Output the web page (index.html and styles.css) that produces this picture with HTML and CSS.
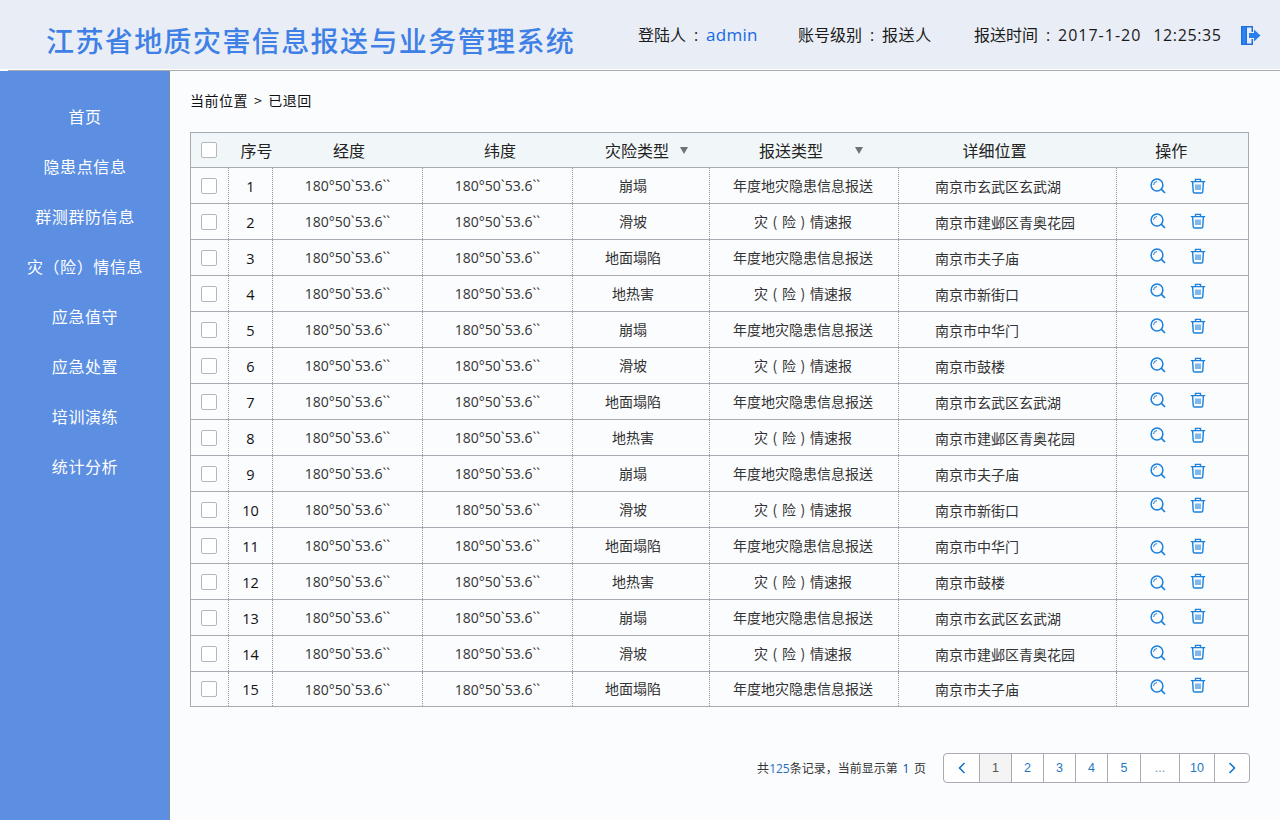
FILE: index.html
```html
<!DOCTYPE html>
<html lang="zh">
<head>
<meta charset="utf-8">
<title>江苏省地质灾害信息报送与业务管理系统</title>
<link rel="stylesheet" href="styles.css">
</head>
<body>
<svg class="sprite" width="0" height="0">
  <symbol id="i-search" viewBox="0 0 16 16"><circle cx="7" cy="7" r="5.900" fill="none" stroke="currentColor" stroke-width="1.500"/><path d="M3.600 7A3.400 3.400 0 0 1 7 3.600" fill="none" stroke="currentColor" stroke-width="1"/><path d="M11.200 11.200l3.800 3.800" fill="none" stroke="currentColor" stroke-width="1.700"/></symbol>
  <symbol id="i-trash" viewBox="0 0 16 16"><path d="M.8 3.600h14.400M5.500 3.400V1.400h5v2" fill="none" stroke="currentColor" stroke-width="1.400"/><path d="M2.600 3.800l.6 9.600c0 1 .6 1.600 1.600 1.600h6.400c1 0 1.600-.6 1.600-1.600l.6-9.600" fill="none" stroke="currentColor" stroke-width="1.400"/><path d="M6 6.500v5.500M8 6.500v5.500M10 6.500v5.500" fill="none" stroke="currentColor" stroke-width="1.100"/></symbol>
</svg>
<header class="topbar">
  <h1 class="title">江苏省地质灾害信息报送与业务管理系统</h1>
  <div class="userinfo">
    <span class="info-user">登陆人<span class="colon">:</span><span class="accent">admin</span></span>
    <span class="info-level">账号级别<span class="colon">:</span><span class="role">报送人</span></span>
    <span class="info-time">报送时间<span class="colon">:</span><span class="latin">2017-1-20</span><span class="latin clock">12:25:35</span></span>
    <svg class="logout" width="20" height="19" viewBox="0 0 20 19"><path d="M0 0h12v6h-1.500V1.500H6v16h4.500V13H12v6H0z" fill="#1f6fe3"/><path d="M1.500 1h3v17h-3z" fill="#2f86f2"/><path d="M8 7h5V3.500L19.500 9.500 13 15.500V12H8z" fill="#2a7ff0"/></svg>
  </div>
</header>
<div class="body">
  <nav class="sidenav">
    <a class="nav-item">首页</a>
    <a class="nav-item">隐患点信息</a>
    <a class="nav-item">群测群防信息</a>
    <a class="nav-item">灾（险）情信息</a>
    <a class="nav-item">应急值守</a>
    <a class="nav-item">应急处置</a>
    <a class="nav-item">培训演练</a>
    <a class="nav-item">统计分析</a>
  </nav>
  <main class="content">
    <div class="crumb">当前位置<span class="sep">&gt;</span>已退回</div>
    <table class="grid">
      <colgroup>
        <col class="c-check"><col class="c-no"><col class="c-lng"><col class="c-lat"><col class="c-type"><col class="c-report"><col class="c-place"><col class="c-op">
      </colgroup>
      <thead>
        <tr>
          <th class="cell-check"><span class="box"></span></th>
          <th>序号</th>
          <th>经度</th>
          <th>纬度</th>
          <th><span class="th-type">灾险类型</span><span class="caret caret-a"></span></th>
          <th><span class="th-report">报送类型</span><span class="caret caret-b"></span></th>
          <th>详细位置</th>
          <th>操作</th>
        </tr>
      </thead>
      <tbody>
        <tr><td class="cell-check"><span class="box"></span></td><td class="no">1</td><td>180°50`53.6``</td><td>180°50`53.6``</td><td>崩塌</td><td>年度地灾隐患信息报送</td><td class="place">南京市玄武区玄武湖</td><td class="ops"><svg class="ic-s"><use href="#i-search"/></svg><svg class="ic-t"><use href="#i-trash"/></svg></td></tr>
        <tr><td class="cell-check"><span class="box"></span></td><td class="no">2</td><td>180°50`53.6``</td><td>180°50`53.6``</td><td>滑坡</td><td>灾 ( 险 ) 情速报</td><td class="place">南京市建邺区青奥花园</td><td class="ops"><svg class="ic-s"><use href="#i-search"/></svg><svg class="ic-t"><use href="#i-trash"/></svg></td></tr>
        <tr><td class="cell-check"><span class="box"></span></td><td class="no">3</td><td>180°50`53.6``</td><td>180°50`53.6``</td><td>地面塌陷</td><td>年度地灾隐患信息报送</td><td class="place">南京市夫子庙</td><td class="ops"><svg class="ic-s"><use href="#i-search"/></svg><svg class="ic-t"><use href="#i-trash"/></svg></td></tr>
        <tr><td class="cell-check"><span class="box"></span></td><td class="no">4</td><td>180°50`53.6``</td><td>180°50`53.6``</td><td>地热害</td><td>灾 ( 险 ) 情速报</td><td class="place">南京市新街口</td><td class="ops"><svg class="ic-s"><use href="#i-search"/></svg><svg class="ic-t"><use href="#i-trash"/></svg></td></tr>
        <tr><td class="cell-check"><span class="box"></span></td><td class="no">5</td><td>180°50`53.6``</td><td>180°50`53.6``</td><td>崩塌</td><td>年度地灾隐患信息报送</td><td class="place">南京市中华门</td><td class="ops"><svg class="ic-s"><use href="#i-search"/></svg><svg class="ic-t"><use href="#i-trash"/></svg></td></tr>
        <tr><td class="cell-check"><span class="box"></span></td><td class="no">6</td><td>180°50`53.6``</td><td>180°50`53.6``</td><td>滑坡</td><td>灾 ( 险 ) 情速报</td><td class="place">南京市鼓楼</td><td class="ops"><svg class="ic-s"><use href="#i-search"/></svg><svg class="ic-t"><use href="#i-trash"/></svg></td></tr>
        <tr><td class="cell-check"><span class="box"></span></td><td class="no">7</td><td>180°50`53.6``</td><td>180°50`53.6``</td><td>地面塌陷</td><td>年度地灾隐患信息报送</td><td class="place">南京市玄武区玄武湖</td><td class="ops"><svg class="ic-s"><use href="#i-search"/></svg><svg class="ic-t"><use href="#i-trash"/></svg></td></tr>
        <tr><td class="cell-check"><span class="box"></span></td><td class="no">8</td><td>180°50`53.6``</td><td>180°50`53.6``</td><td>地热害</td><td>灾 ( 险 ) 情速报</td><td class="place">南京市建邺区青奥花园</td><td class="ops"><svg class="ic-s"><use href="#i-search"/></svg><svg class="ic-t"><use href="#i-trash"/></svg></td></tr>
        <tr><td class="cell-check"><span class="box"></span></td><td class="no">9</td><td>180°50`53.6``</td><td>180°50`53.6``</td><td>崩塌</td><td>年度地灾隐患信息报送</td><td class="place">南京市夫子庙</td><td class="ops"><svg class="ic-s"><use href="#i-search"/></svg><svg class="ic-t"><use href="#i-trash"/></svg></td></tr>
        <tr><td class="cell-check"><span class="box"></span></td><td class="no">10</td><td>180°50`53.6``</td><td>180°50`53.6``</td><td>滑坡</td><td>灾 ( 险 ) 情速报</td><td class="place">南京市新街口</td><td class="ops"><svg class="ic-s"><use href="#i-search"/></svg><svg class="ic-t"><use href="#i-trash"/></svg></td></tr>
        <tr><td class="cell-check"><span class="box"></span></td><td class="no">11</td><td>180°50`53.6``</td><td>180°50`53.6``</td><td>地面塌陷</td><td>年度地灾隐患信息报送</td><td class="place">南京市中华门</td><td class="ops"><svg class="ic-s"><use href="#i-search"/></svg><svg class="ic-t"><use href="#i-trash"/></svg></td></tr>
        <tr><td class="cell-check"><span class="box"></span></td><td class="no">12</td><td>180°50`53.6``</td><td>180°50`53.6``</td><td>地热害</td><td>灾 ( 险 ) 情速报</td><td class="place">南京市鼓楼</td><td class="ops"><svg class="ic-s"><use href="#i-search"/></svg><svg class="ic-t"><use href="#i-trash"/></svg></td></tr>
        <tr><td class="cell-check"><span class="box"></span></td><td class="no">13</td><td>180°50`53.6``</td><td>180°50`53.6``</td><td>崩塌</td><td>年度地灾隐患信息报送</td><td class="place">南京市玄武区玄武湖</td><td class="ops"><svg class="ic-s"><use href="#i-search"/></svg><svg class="ic-t"><use href="#i-trash"/></svg></td></tr>
        <tr><td class="cell-check"><span class="box"></span></td><td class="no">14</td><td>180°50`53.6``</td><td>180°50`53.6``</td><td>滑坡</td><td>灾 ( 险 ) 情速报</td><td class="place">南京市建邺区青奥花园</td><td class="ops"><svg class="ic-s"><use href="#i-search"/></svg><svg class="ic-t"><use href="#i-trash"/></svg></td></tr>
        <tr><td class="cell-check"><span class="box"></span></td><td class="no">15</td><td>180°50`53.6``</td><td>180°50`53.6``</td><td>地面塌陷</td><td>年度地灾隐患信息报送</td><td class="place">南京市夫子庙</td><td class="ops"><svg class="ic-s"><use href="#i-search"/></svg><svg class="ic-t"><use href="#i-trash"/></svg></td></tr>
      </tbody>
    </table>
    <div class="footer">
      <div class="summary">共<span class="num">125</span>条记录，当前显示第 <span class="cur">1</span> 页</div>
      <div class="pager">
        <a class="pg pg-nav"><svg width="8" height="12" viewBox="0 0 8 12"><path d="M6.500 1L1.500 6l5 5" fill="none" stroke="#0e6fc0" stroke-width="1.500"/></svg></a>
        <a class="pg pg-on">1</a>
        <a class="pg">2</a>
        <a class="pg">3</a>
        <a class="pg">4</a>
        <a class="pg pg-5">5</a>
        <a class="pg pg-more">...</a>
        <a class="pg pg-10">10</a>
        <a class="pg pg-nav"><svg width="8" height="12" viewBox="0 0 8 12"><path d="M1.500 1l5 5-5 5" fill="none" stroke="#0e6fc0" stroke-width="1.500"/></svg></a>
      </div>
    </div>
  </main>
</div>
</body>
</html>
```
FILE: styles.css
```css
* { box-sizing: border-box; }
html, body { margin: 0; height: 100%; }
body {
  width: 1280px;
  height: 820px;
  overflow: hidden;
  background: #fbfcfe;
  color: #222;
  font-family: "Noto Sans CJK SC", "Open Sans", sans-serif;
  font-size: 14px;
}
.sprite { position: absolute; }

.topbar {
  position: relative;
  height: 71px;
  display: flex;
  align-items: center;
  justify-content: space-between;
  background: #e9edf5;
  border-bottom: 1px solid #a6a8ad;
  box-shadow: inset 0 -1px 0 #fff;
  padding: 0 19px 0 46px;
}
.topbar::after {
  content: "";
  position: absolute;
  left: 0;
  bottom: -1px;
  width: 8px;
  height: 1px;
  background: #fff;
}
.title {
  margin: 0;
  font-size: 28px;
  font-weight: 500;
  line-height: 40px;
  color: #3f80e6;
  letter-spacing: 1.400px;
  position: relative;
  top: 5px;
  white-space: nowrap;
}
.userinfo {
  display: flex;
  align-items: center;
  font-size: 16px;
  color: #1a1a1a;
  position: relative;
  top: -1px;
  white-space: nowrap;
}
.colon {
  display: inline-block;
  width: 20px;
  text-align: center;
  font-family: "Open Sans", sans-serif;
}
.accent { color: #1469e6; font-family: "Open Sans", sans-serif; font-size: 17px; letter-spacing: .3px; }
.role { letter-spacing: .6px; }
.latin { font-family: "Open Sans", sans-serif; letter-spacing: 1px; }
.latin.clock { margin-left: 12px; letter-spacing: .6px; }
.info-user { width: 160px; }
.info-level { width: 176px; }
.info-time { width: 267px; }
.logout { display: block; position: relative; top: 1px; }

.body { display: flex; height: 749px; }
.sidenav {
  width: 170px;
  flex: none;
  background: #5c8ee2;
  border-right: 1px solid #7a8aa5;
  padding: 20px 0 0 1px;
}
.nav-item {
  display: block;
  height: 50px;
  line-height: 50px;
  text-align: center;
  color: #fff;
  font-size: 16px;
  letter-spacing: .6px;
}

.content { flex: 1; padding: 19px 31px 0 20px; min-width: 0; }
.crumb {
  height: 20px;
  line-height: 20px;
  font-size: 14px;
  color: #111;
  margin-bottom: 22px;
  letter-spacing: .5px;
}
.sep { margin: 0 6px; }

.grid {
  width: 1058px;
  border-collapse: collapse;
  table-layout: fixed;
  border: 1px solid #a8abb3;
  background: #fbfcfe;
}
.c-check { width: 38px; }
.c-no { width: 44px; }
.c-lng { width: 150px; }
.c-lat { width: 150px; }
.c-type { width: 137px; }
.c-report { width: 189px; }
.c-place { width: 218px; }
.c-op { width: 132px; }

.grid th {
  height: 35px;
  padding: 0;
  font-size: 16px;
  font-weight: 400;
  color: #222;
  background: #f1f6f8;
  border-bottom: 1px solid #a8abb3;
  text-align: center;
  position: relative;
}
.grid th:nth-child(2) { padding-left: 12px; }
.grid th:nth-child(3) { padding-left: 3px; }
.grid th:nth-child(4) { padding-left: 5px; }
.grid th:nth-child(7) { padding-right: 26px; }
.grid th:nth-child(8) { padding-right: 22px; }

.grid td {
  height: 36px;
  padding: 0;
  text-align: center;
  color: #333;
  font-size: 14px;
  border-bottom: 1px solid #a8abb3;
  border-left: 1px dotted #8f9299;
}
.grid tbody tr:last-child td { height: 35px; border-bottom: 0; }
.grid td:first-child { border-left: 0; }
.grid td.no { font-family: "Open Sans", sans-serif; font-size: 14.500px; color: #111; padding-top: 1px; }
.grid td:nth-child(3), .grid td:nth-child(4) { font-family: "Open Sans", sans-serif; }
.grid td:nth-child(5) { padding: 0 16px 2px 0; }
.grid td:nth-child(6) { padding: 0 2px 2px 0; word-spacing: 1.500px; }
.grid td.place { text-align: left; padding-left: 36px; }

.box {
  display: block;
  width: 16px;
  height: 16px;
  margin-left: 10px;
  background: #fff;
  border: 1px solid #b4b7bc;
  border-radius: 2px;
}
.th-type { position: relative; left: -4px; }
.th-report { position: relative; left: -13px; }
.caret {
  position: absolute;
  top: 14px;
  width: 0;
  height: 0;
  border-left: 4.500px solid transparent;
  border-right: 4.500px solid transparent;
  border-top: 7px solid #6d7278;
}
.caret-a { left: 107px; }
.caret-b { left: 145px; }

.grid td.ops { color: #1a80dc; white-space: nowrap; text-align: left; padding-left: 33px; }
.ic-s, .ic-t { width: 16px; height: 16px; display: inline-block; vertical-align: middle; position: relative; top: -2px; }
.ic-s { margin-right: 24px; }

/* the icons drift slightly from row to row in the original */
tr:nth-child(2) .ic-s, tr:nth-child(2) .ic-t { top: -3px; }
tr:nth-child(3) .ic-s, tr:nth-child(3) .ic-t { top: -4px; }
tr:nth-child(4) .ic-s, tr:nth-child(4) .ic-t { top: -5px; }
tr:nth-child(5) .ic-s, tr:nth-child(5) .ic-t { top: -6px; }
tr:nth-child(6) .ic-s, tr:nth-child(6) .ic-t { top: -3px; }
tr:nth-child(7) .ic-s, tr:nth-child(7) .ic-t { top: -4px; }
tr:nth-child(8) .ic-s, tr:nth-child(8) .ic-t { top: -5px; }
tr:nth-child(9) .ic-s, tr:nth-child(9) .ic-t { top: -5px; }
tr:nth-child(10) .ic-s, tr:nth-child(10) .ic-t { top: -7px; }
tr:nth-child(11) .ic-s { top: 0; }
tr:nth-child(11) .ic-t { top: -2px; }
tr:nth-child(12) .ic-s { top: -1px; }
tr:nth-child(12) .ic-t { top: -3px; }
tr:nth-child(13) .ic-s { top: -2px; }
tr:nth-child(13) .ic-t { top: -4px; }
tr:nth-child(14) .ic-s { top: -3px; }
tr:nth-child(14) .ic-t { top: -4px; }
tr:nth-child(15) .ic-s { top: -4px; }
tr:nth-child(15) .ic-t { top: -6px; }

.footer {
  display: flex;
  justify-content: flex-end;
  align-items: center;
  margin-top: 46px;
  margin-right: -1px;
}
.summary { font-size: 12px; color: #333; margin-right: 17px; }
.num { color: #1f6fc0; font-family: "Open Sans", sans-serif; }
.cur { color: #114a9e; font-family: "Open Sans", sans-serif; margin: 0 2px; }
.pager {
  display: flex;
  height: 30px;
  background: #fff;
  border: 1px solid #a8abb3;
  border-radius: 4px;
  overflow: hidden;
}
.pg {
  width: 32px;
  display: flex;
  align-items: center;
  justify-content: center;
  font-family: "Liberation Sans", sans-serif;
  font-size: 12.500px;
  color: #1f77c4;
  border-left: 1px solid #a8abb3;
}
.pg:first-child { border-left: 0; width: 35px; }
.pg-on { background: #f4f4f4; color: #555; }
.pg-5 { width: 33px; }
.pg-more { width: 39px; color: #6a90b0; }
.pg-10 { width: 35px; }
.pg-nav:last-child { width: 35px; }
```
